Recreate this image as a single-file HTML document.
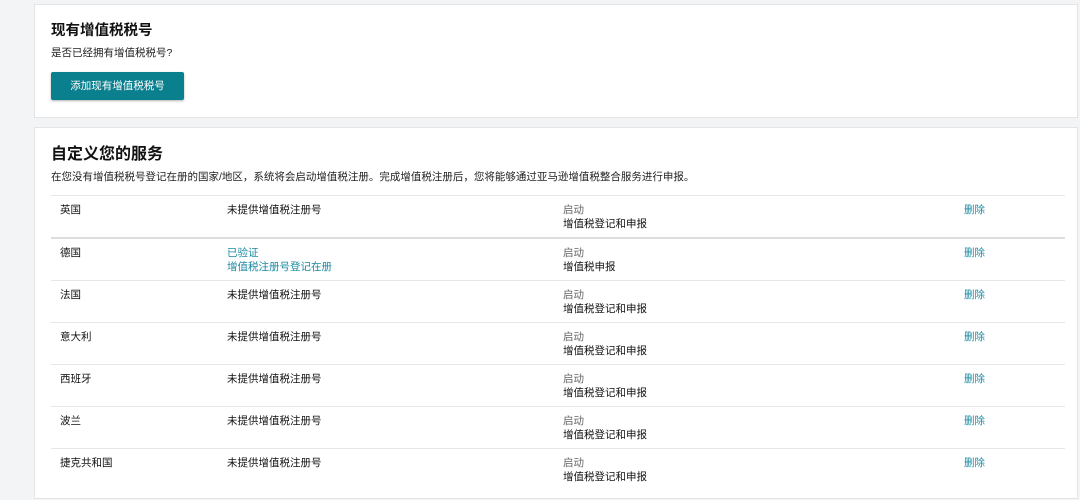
<!DOCTYPE html>
<html><head><meta charset="utf-8"><style>
body{margin:0;width:1080px;height:500px;background:#f3f4f5;font-family:"Liberation Sans","Noto Sans CJK SC",sans-serif;color:#111;overflow:hidden;position:relative}
.p{position:absolute;left:34px;width:1042px;background:#fff;border:1px solid #e2e4e5}
.t{position:absolute;font-weight:bold;color:#111;left:16px}
.s{position:absolute;font-size:10.5px;left:16px;color:#222}
.btn{position:absolute;left:16px;top:67px;width:133px;height:28px;background:#0a7f8e;color:#fff;font-size:10.5px;text-align:center;line-height:28px;border-radius:2px;box-shadow:0 1px 2px rgba(0,0,0,.3)}
.row{position:absolute;left:16px;width:1014px;height:42px;border-top:1px solid #e6e6e6;font-size:10.5px}
.row div{position:absolute;top:7px;line-height:14px}
.g{color:#666}.l{color:#1a8aa0}
</style></head><body>
<div class="p" style="top:4px;height:112px">
<div class="t" style="top:14px;font-size:14.5px">现有增值税税号</div>
<div class="s" style="top:40px">是否已经拥有增值税税号?</div>
<div class="btn">添加现有增值税税号</div>
</div>
<div class="p" style="top:127px;height:370px">
<div class="t" style="top:12px;font-size:16px">自定义您的服务</div>
<div class="s" style="top:41px">在您没有增值税税号登记在册的国家/地区，系统将会启动增值税注册。完成增值税注册后，您将能够通过亚马逊增值税整合服务进行申报。</div>
<div class="row" style="top:67px"><div style="left:9px">英国</div><div style="left:176px">未提供增值税注册号</div><div style="left:512px"><span class="g">启动</span><br>增值税登记和申报</div><div class="l" style="left:913px">删除</div></div>
<div class="row" style="top:109px;border-top:2px solid #ddd"><div style="left:9px">德国</div><div class="l" style="left:176px">已验证<br>增值税注册号登记在册</div><div style="left:512px"><span class="g">启动</span><br>增值税申报</div><div class="l" style="left:913px">删除</div></div>
<div class="row" style="top:152px"><div style="left:9px">法国</div><div style="left:176px">未提供增值税注册号</div><div style="left:512px"><span class="g">启动</span><br>增值税登记和申报</div><div class="l" style="left:913px">删除</div></div>
<div class="row" style="top:194px"><div style="left:9px">意大利</div><div style="left:176px">未提供增值税注册号</div><div style="left:512px"><span class="g">启动</span><br>增值税登记和申报</div><div class="l" style="left:913px">删除</div></div>
<div class="row" style="top:236px"><div style="left:9px">西班牙</div><div style="left:176px">未提供增值税注册号</div><div style="left:512px"><span class="g">启动</span><br>增值税登记和申报</div><div class="l" style="left:913px">删除</div></div>
<div class="row" style="top:278px"><div style="left:9px">波兰</div><div style="left:176px">未提供增值税注册号</div><div style="left:512px"><span class="g">启动</span><br>增值税登记和申报</div><div class="l" style="left:913px">删除</div></div>
<div class="row" style="top:320px"><div style="left:9px">捷克共和国</div><div style="left:176px">未提供增值税注册号</div><div style="left:512px"><span class="g">启动</span><br>增值税登记和申报</div><div class="l" style="left:913px">删除</div></div>
</div>
</body></html>
